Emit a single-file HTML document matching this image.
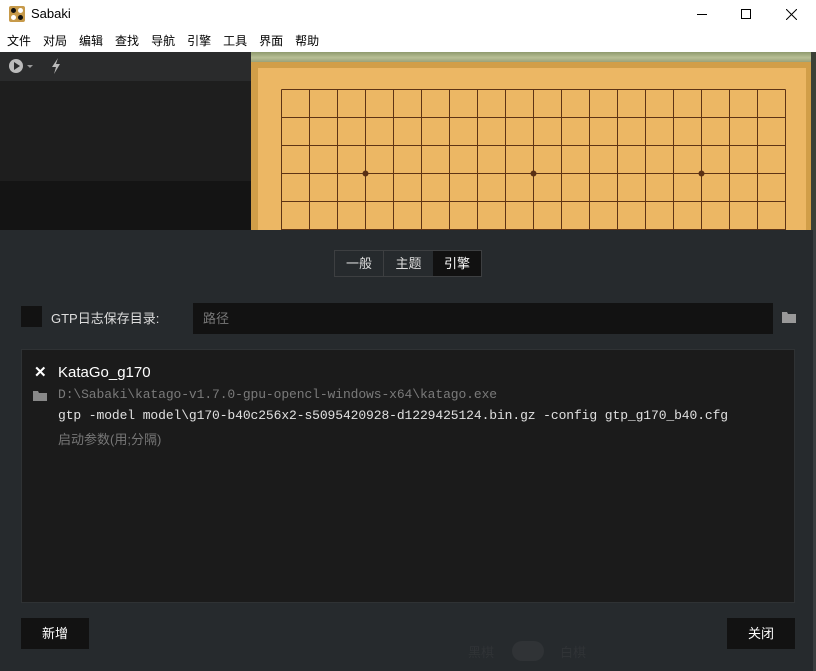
<!DOCTYPE html>
<html><head><meta charset="utf-8"><style>
*{margin:0;padding:0;box-sizing:border-box}
body{width:816px;height:671px;overflow:hidden;position:relative;background:#262a2d;font-family:"Liberation Sans","Noto Sans CJK SC",sans-serif}
.a{position:absolute}
.mono{font-family:"Liberation Mono","Noto Sans CJK SC",monospace;font-size:13px;letter-spacing:-0.1px}
</style></head><body>
<div class="a" style="left:0;top:0;width:816px;height:30px;background:#fff"></div>
<div class="a" style="left:9px;top:6px;width:16px;height:16px;background:#c79a4a;border-radius:2px"></div>
<div class="a" style="left:11px;top:8px;width:5px;height:5px;background:#111;border-radius:50%"></div>
<div class="a" style="left:18px;top:15px;width:5px;height:5px;background:#111;border-radius:50%"></div>
<div class="a" style="left:18px;top:8px;width:5px;height:5px;background:#fff;border-radius:50%"></div>
<div class="a" style="left:11px;top:15px;width:5px;height:5px;background:#fff;border-radius:50%"></div>
<div class="a" style="left:31px;top:6px;font-size:13px;color:#000">Sabaki</div>
<div class="a" style="left:697px;top:14px;width:10px;height:1px;background:#000"></div>
<div class="a" style="left:741px;top:9px;width:10px;height:10px;border:1px solid #000"></div>
<svg class="a" style="left:786px;top:9px" width="11" height="11"><path d="M0 0L11 11M11 0L0 11" stroke="#000" stroke-width="1"/></svg>
<div class="a" style="left:0;top:30px;width:816px;height:22px;background:#fff;font-size:12px;color:#000;line-height:22px;padding-left:7px;word-spacing:0">
<span style="margin-right:12px">文件</span><span style="margin-right:12px">对局</span><span style="margin-right:12px">编辑</span><span style="margin-right:12px">查找</span><span style="margin-right:12px">导航</span><span style="margin-right:12px">引擎</span><span style="margin-right:12px">工具</span><span style="margin-right:12px">界面</span><span>帮助</span></div>
<!-- left panel -->
<div class="a" style="left:0;top:52px;width:251px;height:29px;background:#2a2b2c"></div>
<div class="a" style="left:9px;top:59px;width:14px;height:14px;background:#bbb;border-radius:50%"></div>
<div class="a" style="left:14px;top:62px;width:0;height:0;border-left:6px solid #2a2b2c;border-top:4px solid transparent;border-bottom:4px solid transparent"></div>
<div class="a" style="left:27px;top:65px;border-top:3px solid #999;border-left:3px solid transparent;border-right:3px solid transparent"></div>
<svg class="a" style="left:50px;top:58px" width="12" height="16"><path d="M8 0L2 9H6L4 16L10 6H6Z" fill="#bbb"/></svg>
<div class="a" style="left:0;top:81px;width:251px;height:100px;background:#1e1e1e"></div>
<div class="a" style="left:0;top:181px;width:251px;height:49px;background:#141414"></div>
<!-- board -->
<div class="a" style="left:251px;top:52px;width:565px;height:14px;background:linear-gradient(#8f9a6e,#b8bf95 40%,#7d8760)"></div>
<div class="a" style="left:251px;top:62px;width:560px;height:168px;background:#d19e48"></div>
<div class="a" style="left:258px;top:68px;width:548px;height:162px;background:#ecb764"></div>
<div class="a" style="left:811px;top:52px;width:5px;height:178px;background:#3b4036"></div>
<svg class="a" style="left:251px;top:52px" width="565" height="178">
<g stroke="#5e3415" stroke-width="1">
<path d="M30.5 37.5H534.5M30.5 65.5H534.5M30.5 93.5H534.5M30.5 121.5H534.5M30.5 149.5H534.5M30.5 177.5H534.5"/>
<path d="M30.5 37.5V178M58.5 37.5V178M86.5 37.5V178M114.5 37.5V178M142.5 37.5V178M170.5 37.5V178M198.5 37.5V178M226.5 37.5V178M254.5 37.5V178M282.5 37.5V178M310.5 37.5V178M338.5 37.5V178M366.5 37.5V178M394.5 37.5V178M422.5 37.5V178M450.5 37.5V178M478.5 37.5V178M506.5 37.5V178M534.5 37.5V178"/>
</g>
<circle cx="114.5" cy="121.5" r="3" fill="#5a3014"/><circle cx="282.5" cy="121.5" r="3" fill="#5a3014"/><circle cx="450.5" cy="121.5" r="3" fill="#5a3014"/>
</svg>
<!-- overlay -->
<div class="a" style="left:813px;top:230px;width:3px;height:441px;background:#3a3d3f"></div>
<div class="a" style="left:334px;top:250px;width:148px;height:27px;border:1px solid #3d3f41;display:flex;font-size:13px;color:#ddd;line-height:25px">
<div style="width:49px;text-align:center;border-right:1px solid #3d3f41">一般</div><div style="width:49px;text-align:center">主题</div><div style="width:48px;text-align:center;background:#111;color:#fff">引擎</div></div>
<div class="a" style="left:21px;top:306px;width:21px;height:21px;background:#121212"></div>
<div class="a" style="left:51px;top:308px;font-size:13px;color:#ddd">GTP日志保存目录:</div>
<div class="a" style="left:193px;top:303px;width:580px;height:31px;background:#121212;color:#777;font-size:13px;line-height:31px;padding-left:10px">路径</div>
<svg class="a" style="left:782px;top:311px" width="14" height="12"><path d="M0 1H5L6 3H14V12H0Z" fill="#999"/></svg>
<div class="a" style="left:21px;top:349px;width:774px;height:254px;background:#1b1b1b;border:1px solid #2f3234"></div>
<div class="a" style="left:34px;top:363px;font-size:15px;color:#fff;font-weight:bold">✕</div>
<div class="a" style="left:58px;top:364px;font-size:15px;color:#fff">KataGo_g170</div>
<svg class="a" style="left:33px;top:390px" width="14" height="11"><path d="M0 1H5L6 3H14V11H0Z" fill="#888"/></svg>
<div class="a mono" style="left:58px;top:387px;color:#7a7a7a">D:\Sabaki\katago-v1.7.0-gpu-opencl-windows-x64\katago.exe</div>
<div class="a mono" style="left:58px;top:408px;color:#e0e0e0">gtp -model model\g170-b40c256x2-s5095420928-d1229425124.bin.gz -config gtp_g170_b40.cfg</div>
<div class="a" style="left:58px;top:429px;font-size:13px;color:#777">启动参数(用;分隔)</div>
<div class="a" style="left:21px;top:618px;width:68px;height:31px;background:#121212;color:#fff;font-size:13px;text-align:center;line-height:31px">新增</div>
<div class="a" style="left:727px;top:618px;width:68px;height:31px;background:#121212;color:#fff;font-size:13px;text-align:center;line-height:31px">关闭</div>
<div class="a" style="left:468px;top:642px;font-size:13px;color:#303336">黑棋</div>
<div class="a" style="left:512px;top:641px;width:32px;height:20px;border-radius:10px;background:#303336"></div>
<div class="a" style="left:560px;top:642px;font-size:13px;color:#303336">白棋</div>
</body></html>
